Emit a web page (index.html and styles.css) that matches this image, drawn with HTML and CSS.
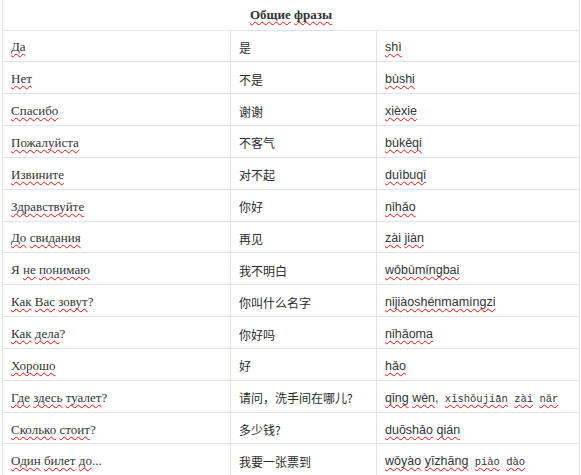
FILE: index.html
```html
<!DOCTYPE html>
<html lang="ru">
<head>
<meta charset="utf-8">
<title>Общие фразы</title>
<link rel="stylesheet" href="styles.css">
</head>
<body>
<table class="phrases">
  <colgroup>
    <col class="c-ru">
    <col class="c-zh">
    <col class="c-py">
  </colgroup>
  <thead>
    <tr class="head-row"><th colspan="3"><span class="sp">Общие</span> <span class="sp">фразы</span></th></tr>
  </thead>
  <tbody>
    <tr><td class="ru"><span class="sp">Да</span></td><td class="zh">是</td><td class="py"><span class="sp">shì</span></td></tr>
    <tr><td class="ru"><span class="sp">Нет</span></td><td class="zh">不是</td><td class="py"><span class="sp">bùshi</span></td></tr>
    <tr><td class="ru"><span class="sp">Спасибо</span></td><td class="zh">谢谢</td><td class="py"><span class="sp">xièxie</span></td></tr>
    <tr><td class="ru"><span class="sp">Пожалуйста</span></td><td class="zh">不客气</td><td class="py"><span class="sp">bùkěqi</span></td></tr>
    <tr><td class="ru"><span class="sp">Извините</span></td><td class="zh">对不起</td><td class="py"><span class="sp">duìbuqǐ</span></td></tr>
    <tr><td class="ru"><span class="sp">Здравствуйте</span></td><td class="zh">你好</td><td class="py"><span class="sp">nǐhǎo</span></td></tr>
    <tr><td class="ru"><span class="sp">До</span> <span class="sp">свидания</span></td><td class="zh">再见</td><td class="py"><span class="sp">zài</span> <span class="sp">jiàn</span></td></tr>
    <tr><td class="ru">Я <span class="sp">не</span> <span class="sp">понимаю</span></td><td class="zh">我不明白</td><td class="py"><span class="sp">wǒbùmíngbai</span></td></tr>
    <tr><td class="ru"><span class="sp">Как</span> <span class="sp">Вас</span> <span class="sp">зовут</span>?</td><td class="zh">你叫什么名字</td><td class="py"><span class="sp">nǐjiàoshénmamíngzi</span></td></tr>
    <tr><td class="ru"><span class="sp">Как</span> <span class="sp">дела</span>?</td><td class="zh">你好吗</td><td class="py"><span class="sp">nǐhǎoma</span></td></tr>
    <tr><td class="ru"><span class="sp">Хорошо</span></td><td class="zh">好</td><td class="py"><span class="sp">hǎo</span></td></tr>
    <tr><td class="ru"><span class="sp">Где</span> <span class="sp">здесь</span> <span class="sp">туалет</span>?</td><td class="zh">请问，洗手间在哪儿?</td><td class="py"><span class="sp">qǐng</span> <span class="sp">wèn</span>,<span class="mono"> <span class="sp">xǐshǒujiān</span> <span class="sp">zài</span> <span class="sp">nǎr</span></span></td></tr>
    <tr><td class="ru"><span class="sp">Сколько</span> <span class="sp">стоит</span>?</td><td class="zh">多少钱?</td><td class="py"><span class="sp">duōshǎo</span> <span class="sp">qián</span></td></tr>
    <tr><td class="ru"><span class="sp">Один</span> <span class="sp">билет</span> <span class="sp">до</span>...</td><td class="zh">我要一张票到</td><td class="py"><span class="sp">wǒyào</span> <span class="sp">yīzhāng</span><span class="mono"> <span class="sp">piào</span> <span class="sp">dào</span></span></td></tr>
  </tbody>
</table>
</body>
</html>
```
FILE: styles.css
```css
html, body {
  margin: 0;
  padding: 0;
  background: #ffffff;
}

.phrases {
  margin-left: 2px;
  width: 577px;
  table-layout: fixed;
  border-collapse: collapse;
  color: #333333;
}

.c-ru { width: 228px; }
.c-zh { width: 146px; }
.c-py { width: 203px; }

.phrases th,
.phrases td {
  border: 1px solid #e3e3e3;
  padding: 3px 7px 0 8px;
  vertical-align: middle;
  text-align: left;
  white-space: nowrap;
  overflow: hidden;
}

.phrases tbody tr {
  height: 31.85px;
}

.head-row {
  height: 30px;
}

.phrases th {
  border-top: none;
  padding: 0;
  text-align: center;
  font-family: "Liberation Serif", "Times New Roman", serif;
  font-size: 13px;
  font-weight: bold;
}

.ru {
  font-family: "Liberation Serif", "Times New Roman", serif;
  font-size: 13px;
}

.zh {
  font-family: "Noto Sans CJK SC", sans-serif;
  font-size: 12px;
  color: #2a2a2a;
}

.py {
  font-family: "Liberation Sans", Arial, sans-serif;
  font-size: 12.5px;
}

.mono {
  font-family: "Liberation Mono", "Courier New", monospace;
  font-size: 10.5px;
  white-space: pre;
}

.sp {
  text-decoration: underline wavy #e01010;
  text-decoration-thickness: 1px;
  text-underline-offset: 2px;
  text-decoration-skip-ink: none;
}
```
